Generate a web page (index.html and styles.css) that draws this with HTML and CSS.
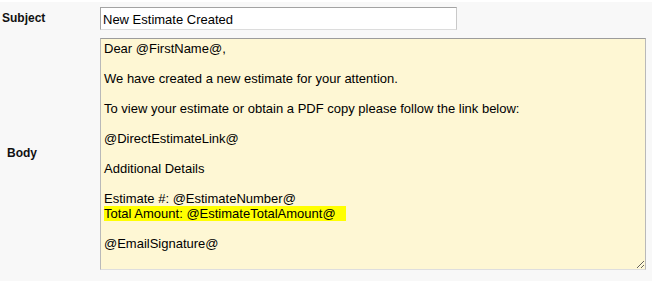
FILE: index.html
```html
<!DOCTYPE html>
<html>
<head>
<meta charset="utf-8">
<link rel="stylesheet" href="styles.css">
</head>
<body>
<div class="form">
  <div class="label label-subject">Subject</div>
  <div class="field"><div class="input">New Estimate Created</div></div>
  <div class="label label-body">Body</div>
  <div class="field">
    <div class="editor">
      <div>Dear @FirstName@,</div>
      <div class="blank">&nbsp;</div>
      <div>We have created a new estimate for your attention.</div>
      <div class="blank">&nbsp;</div>
      <div>To view your estimate or obtain a PDF copy please follow the link below:</div>
      <div class="blank">&nbsp;</div>
      <div>@DirectEstimateLink@</div>
      <div class="blank">&nbsp;</div>
      <div>Additional Details</div>
      <div class="blank">&nbsp;</div>
      <div>Estimate #: @EstimateNumber@</div>
      <div><span class="hl">Total Amount: @EstimateTotalAmount@&nbsp;&nbsp;&nbsp;</span></div>
      <div class="blank">&nbsp;</div>
      <div>@EmailSignature@</div>
    </div>
  </div>
</div>
</body>
</html>
```
FILE: styles.css
```css
html, body {
  margin: 0;
  padding: 0;
  background: #ffffff;
}
body {
  font-family: "Liberation Sans", Arial, sans-serif;
  width: 655px;
  height: 281px;
  overflow: hidden;
}
.form {
  margin-top: 2px;
  width: 652px;
  height: 279px;
  background: #f8f8f8;
  box-sizing: border-box;
  padding-top: 5px;
  display: grid;
  grid-template-columns: 100px 546px;
  grid-template-rows: 23px 232px;
  row-gap: 8px;
}
.label {
  font-size: 12px;
  font-weight: bold;
  color: #111;
  display: flex;
  align-items: center;
}
.label-subject {
  padding-left: 2px;
  padding-bottom: 1px;
}
.label-body {
  padding-left: 7px;
  padding-bottom: 2px;
}
.input {
  width: 357px;
  height: 23px;
  box-sizing: border-box;
  background: #fff;
  border-style: solid;
  border-width: 1px;
  border-color: #a3a3a3 #c9c9c9 #dcdcdc #a3a3a3;
  font-size: 13px;
  line-height: 15px;
  padding: 4px 2px 0 2px;
  color: #000;
}
.editor {
  width: 546px;
  height: 232px;
  box-sizing: border-box;
  background: #fef7d4;
  border-style: solid;
  border-width: 1px;
  border-color: #9c9c9c #b9b9b9 #dedede #b9b9b9;
  padding: 2px 3px;
  font-size: 13px;
  line-height: 15px;
  color: #000;
  resize: both;
  overflow: auto;
}
.hl {
  background: #ffff00;
}
```
